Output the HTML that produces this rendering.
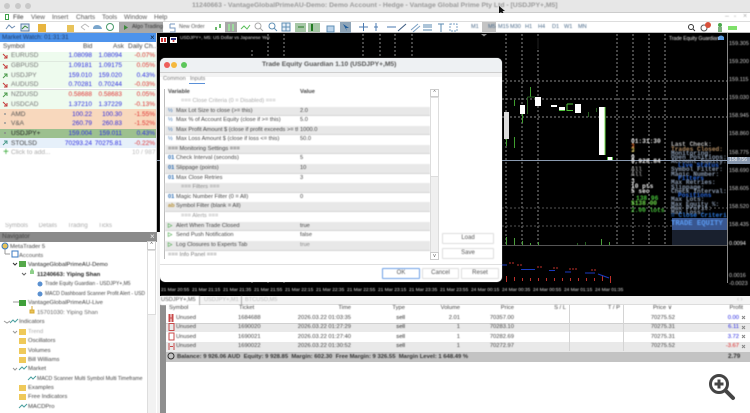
<!DOCTYPE html>
<html><head><meta charset="utf-8">
<style>
html,body{margin:0;padding:0;background:#fff}
#p{position:relative;width:750px;height:413px;overflow:hidden;font-family:"Liberation Sans",sans-serif;font-size:6.5px;color:#333;background:#fff}
#p div{position:absolute;white-space:nowrap;box-sizing:border-box}
.t{filter:blur(.4px)}
.mw{left:0;width:156px;height:9px;line-height:9px}
.nm{left:11px;color:#777}
.v{color:#2a2ae0;text-align:right}
.r{color:#e03030;text-align:right}
.dr{left:165px;width:265px;height:9.6px;line-height:9.6px;font-size:5.7px;color:#444}
.g{background:#e8e8e8;border-bottom:1px solid #d4d4d4}
.dr span{position:absolute;top:0}
.nv{font-size:5.9px;color:#444;line-height:9px;height:9px}
.ax{left:729px;color:#ccc;font-size:5.5px;line-height:7px}
.ov{font-family:"Liberation Mono",monospace;font-size:6.2px;line-height:6px;color:#bbb;font-weight:bold}
.br{left:166px;width:584px;height:9.6px;line-height:9.6px;font-size:5.8px;color:#444}
.br span{position:absolute;top:0}
.btn{border:1px solid #ddd;background:#fff;text-align:center;font-size:6px;color:#555;line-height:9px;border-radius:1px}
.tm{position:absolute;top:0;color:#ddd}
</style></head><body>
<div id="p">
<!-- title bar -->
<div style="left:0;top:0;width:750px;height:13px;background:#e7e7e7;border-bottom:1px solid #ccc"></div>
<div style="left:4px;top:3px;width:6px;height:6px;border-radius:50%;background:#c9c9c9"></div>
<div style="left:15px;top:3px;width:6px;height:6px;border-radius:50%;background:#c9c9c9"></div>
<div style="left:25px;top:3px;width:6px;height:6px;border-radius:50%;background:#c9c9c9"></div>
<div class="t" style="left:192px;top:1px;font-size:6.8px;line-height:10px;font-weight:bold;color:#9a9a9a">11240663 - VantageGlobalPrimeAU-Demo: Demo Account - Hedge - Vantage Global Prime Pty Ltd - [USDJPY+,M5]</div>
<svg style="position:absolute;left:498px;top:5px" width="8" height="11"><path d="M1 1 L1 9 L3 7 L5 10 L6 9 L4.500 6 L7 6 Z" fill="#111"/></svg>
<!-- menu -->
<div style="left:0;top:13px;width:750px;height:9px;background:#fff;border-bottom:1px solid #ddd"></div>
<div style="left:5px;top:14px;width:4px;height:6px;border:1px solid #3fa14a"></div>
<div class="t" style="left:13px;top:13px;font-size:6.5px;line-height:9px;color:#333">File</div>
<div class="t" style="left:31px;top:13px;line-height:9px;color:#555">View</div>
<div class="t" style="left:52px;top:13px;line-height:9px;color:#555">Insert</div>
<div class="t" style="left:76px;top:13px;line-height:9px;color:#555">Charts</div>
<div class="t" style="left:102px;top:13px;line-height:9px;color:#555">Tools</div>
<div class="t" style="left:124px;top:13px;line-height:9px;color:#555">Window</div>
<div class="t" style="left:154px;top:13px;line-height:9px;color:#555">Help</div>
<div class="t" style="left:725px;top:12px;font-size:7px;line-height:10px;color:#aaa">–</div>
<div class="t" style="left:734px;top:12px;font-size:6px;line-height:10px;color:#aaa">▫</div>
<div class="t" style="left:743px;top:12px;font-size:7px;line-height:10px;color:#aaa">×</div>
<!-- toolbar -->
<div style="left:0;top:22px;width:750px;height:11px;background:#fff;border-bottom:1px solid #bbb"></div>
<svg style="position:absolute;left:0;top:22px" width="750" height="11">
<path d="M6 7 L9 3 L12 6 L15 4" stroke="#6a8ab0" fill="none"/>
<rect x="21" y="2" width="8" height="7" fill="#dfe8f2" stroke="#5a7ea8"/><path d="M22 7 L25 4 L28 6" stroke="#3a8a3a" fill="none"/>
<rect x="38" y="2" width="8" height="8" fill="#e8b53f"/>
<rect x="67" y="3" width="7" height="7" fill="#e8c35a"/>
<path d="M81 5 L85 2 M81 5 L85 8 M89 5 L85 2" stroke="#bbb" fill="none"/>
<path d="M93 7 Q93 3 97 3 Q101 3 102 7 Z" fill="#7aa6cc"/>
<circle cx="110" cy="5" r="3.500" fill="none" stroke="#4a9a6a"/>
<rect x="119" y="0" width="44" height="11" fill="#a8a8a8"/><path d="M124 3 L124 8 L128 5.500 Z" fill="#3c8a3c"/>
<path d="M170 2 h5 M170 2 v4 h5 v4 h-5" stroke="#7a9ac0" fill="none"/>
<path d="M216 8 v-3 M220 6 v-4" stroke="#3ca23c" stroke-width="1.500"/>
<rect x="225" y="0" width="12" height="11" fill="#a8a8a8"/><rect x="228" y="2" width="2" height="7" fill="#9fdc9f"/><rect x="232" y="2" width="2" height="7" fill="#9fdc9f"/>
<path d="M241 7 L244 4 L247 7 L250 3" stroke="#5abf5a" fill="none"/>
<circle cx="258" cy="4" r="3" fill="none" stroke="#aaa"/><path d="M260 6 L263 9" stroke="#aaa"/>
<circle cx="272" cy="4" r="3" fill="none" stroke="#5f8fb5"/><path d="M274 6 L277 9" stroke="#5f8fb5"/>
<rect x="282" y="1" width="8" height="8" fill="#e4eef6" stroke="#5f8fb5"/><path d="M286 1 v8 M282 5 h8" stroke="#5f8fb5"/>
<rect x="295" y="1" width="11" height="9" fill="#a6c7a6"/><path d="M304 5 h-6" stroke="#227a22"/>
<rect x="308" y="1" width="12" height="9" fill="#a6c7a6"/><rect x="311" y="2" width="2" height="7" fill="#227a22"/>
<rect x="327" y="4" width="7" height="6" fill="#bcd4ea" stroke="#5f8fb5"/>
<rect x="340" y="0" width="11" height="11" fill="#8fa5b8"/><path d="M343 2 L349 6 L346 6 L347 9 Z" fill="#1a5a9a"/>
<path d="M359 5 h9 M363.500 1 v8" stroke="#4a7ab0"/><path d="M374 5 h4 M376 1 v8" stroke="#4a7ab0"/><path d="M387 5 h9" stroke="#4a7ab0"/>
<path d="M398 9 L406 2" stroke="#3a5a80"/><path d="M411 8 L418 2 M413 10 L420 4" stroke="#7aa0c4"/>
<path d="M423 3 h9 M423 5 h9 M423 8 h9" stroke="#5a8ab0"/><path d="M438 2 h6 M441 2 v8" stroke="#5a8ab0"/>
<rect x="450" y="2" width="7" height="7" fill="none" stroke="#7aa0c4" stroke-dasharray="2 1"/>
<rect x="482" y="0" width="14" height="11" fill="#c4c4c4"/>
<circle cx="691" cy="5" r="2.500" fill="none" stroke="#333"/><path d="M693 7 L695 9" stroke="#333"/>
<circle cx="704" cy="6" r="3" fill="none" stroke="#555"/><circle cx="708" cy="3" r="3" fill="#d8503a"/>
<circle cx="720" cy="3" r="2" fill="#4aa84a"/><rect x="718" y="5" width="4" height="5" fill="#7fae7f"/>
<rect x="728" y="4" width="9" height="4" fill="#7fe06a"/>
</svg>
<div class="t" style="left:132px;top:23px;line-height:9px;color:#333;font-size:5.5px">Algo Trading</div>
<div class="t" style="left:179px;top:23px;line-height:9px;color:#555;font-size:5.3px">New Order</div>
<div class="t" style="left:471px;top:23px;line-height:9px;color:#4a6a8a;font-size:5.6px">M1</div>
<div class="t" style="left:488px;top:23px;line-height:9px;color:#4a6a8a;font-size:5.6px">M5</div>
<div class="t" style="left:498px;top:23px;line-height:9px;color:#4a6a8a;font-size:5.6px">M15</div>
<div class="t" style="left:510px;top:23px;line-height:9px;color:#4a6a8a;font-size:5.6px">M30</div>
<div class="t" style="left:525px;top:23px;line-height:9px;color:#4a6a8a;font-size:5.6px">H1</div>
<div class="t" style="left:538px;top:23px;line-height:9px;color:#4a6a8a;font-size:5.6px">H4</div>
<div class="t" style="left:552px;top:23px;line-height:9px;color:#4a6a8a;font-size:5.6px">D1</div>
<div class="t" style="left:564px;top:23px;line-height:9px;color:#4a6a8a;font-size:5.6px">W1</div>
<div class="t" style="left:578px;top:23px;line-height:9px;color:#4a6a8a;font-size:5.6px">MN</div>
<!-- chart -->
<div style="left:157px;top:33px;width:593px;height:263px;background:#000"></div>
<svg style="position:absolute;left:157px;top:33px" width="593" height="263">
<g stroke="#8a8a8a" stroke-dasharray="2 2" fill="none">
<path d="M95 17V250M111 1V250M127 1V250M223 1V25M238 1V25M255 1V25M206 1V25"/>
<path d="M349 1V212M365 1V212M381 1V212M460 1V212M476 1V212M492 1V212M508 1V212"/>
<path d="M345 48H570M345 66H570M345 84H570"/>
</g>
<g stroke="#555" stroke-dasharray="2 2" fill="none"><path d="M345 175H570M345 193H570"/></g>
<path d="M0 127.500H593" stroke="#8a9ab0"/>
<path d="M345 212.500H570" stroke="#555"/>
<path d="M570.500 0V250" stroke="#888"/>
<!-- candles -->
<g fill="#fff">
<rect x="347" y="79" width="5" height="27" fill="#ddd"/>
<rect x="363" y="72" width="5" height="9"/>
<rect x="378" y="64" width="6" height="9"/>
<rect x="394" y="72" width="6" height="2"/>
<rect x="402" y="74" width="6" height="3"/>
<rect x="418" y="71" width="6" height="9"/>
<rect x="442" y="74" width="6" height="48"/>
<rect x="450" y="124" width="6" height="3"/>
</g>
<path d="M448 74V122" stroke="#6fe04a"/>
<path d="M402 77.500H408M410 71V77.500H416M410 71H416M450.500 124V127M455.500 124V127" stroke="#4fc23a" fill="none"/>
<path d="M349.500 106V113M357.500 67V73M357.500 104V115M365.500 81V90M373.500 54V64" stroke="#3f9f2f"/>
<path d="M370.500 64V81M370.500 64H378M431.500 79V84M439.500 75V79" stroke="#265f1f" fill="none"/>
<path d="M381 5V16" stroke="#222"/>
<!-- volumes -->
<path d="M349.500 204V212M357.500 205V212M365.500 208V212M373.500 210V212M381.500 209V212M444.500 206V212M452.500 209V212" stroke="#4a9f3a" stroke-width="1"/>
<path d="M420.500 210V212M428.500 209V212" stroke="#245f1f"/>
<!-- indicator -->
<g stroke="#c0302a"><path d="M349.500 243V249M357.500 244V248M365.500 245V248M373.500 245V248M381.500 245V248M389.500 245V248M397.500 245V248M405.500 245V248M413.500 245V248M421.500 245V248M429.500 245V248M437.500 245V248M445.500 243V248M453.500 243V250"/>
<path d="M352 230H358M360 232H366M380 234H386M396 235H402M412 236H420M434 237H440" stroke-dasharray="2 1"/></g>
<path d="M345 232H350M364 236.500H378M392 237.500H398M408 239H414M428 240H438M441 241L452 245" stroke="#1a3ac0"/>
<!-- bottom right panel -->
<rect x="515" y="185" width="55" height="12" fill="#39568f"/>
<rect x="515" y="197" width="55" height="15" fill="#19202e"/>
<!-- chart tab flags -->
<rect x="3" y="4" width="7" height="6" fill="#fff"/><rect x="4" y="5" width="2" height="4" fill="#c33"/><rect x="7" y="5" width="2" height="4" fill="#c33"/>
<rect x="13" y="4" width="7" height="6" fill="#fff"/><rect x="14" y="5" width="5" height="2" fill="#338"/><circle cx="16.500" cy="8" r="1" fill="#c33"/>
<path d="M561 4 q3 -3 6 0 v3 h-6 z" fill="#5a9ae0"/>
<path d="M326 1 l3 2.500 l3 -2.500 z" fill="#888" transform="translate(-2,0)"/>
</svg>
<div class="t" style="left:180px;top:34px;color:#ddd;font-size:4.7px;line-height:8px">USDJPY+, M5: US Dollar vs Japanese Yen</div>
<div class="t" style="left:669px;top:35px;color:#e8e8e8;font-size:5px;line-height:8px">Trade Equity Guardian</div>
<div class="ax t" style="top:41px">159.305</div>
<div class="ax t" style="top:59px">159.200</div>
<div class="ax t" style="top:77px">159.115</div>
<div class="ax t" style="top:95px">159.030</div>
<div class="ax t" style="top:113px">158.945</div>
<div class="ax t" style="top:131px">158.860</div>
<div class="ax t" style="top:150px">158.775</div>
<div style="left:727px;top:157px;width:23px;height:7px;background:#8a9ab0;color:#eee;font-size:5px;line-height:7px;padding-left:2px">158.756</div>
<div class="ax t" style="top:168px">158.690</div>
<div class="ax t" style="top:186px">158.605</div>
<div class="ax t" style="top:204px">158.520</div>
<div class="ax t" style="top:222px">158.435</div>
<div class="ax t" style="top:241px;color:#fff">0.0094</div>
<div class="ax t" style="top:273px">0.0016</div>
<div class="ax t" style="top:281px">-0.0023</div>
<!-- overlay -->
<div class="ov t" style="left:631px;top:139px;color:#e8e8e8;font-size:6.2px">01:31:30</div>
<div class="ov t" style="left:631px;top:144px;color:#e06a2a">3</div>
<div class="ov t" style="left:631px;top:148px;color:#d8c050">3</div>
<div class="ov t" style="left:631px;top:155px;color:#eee">9</div>
<div class="ov t" style="left:631px;top:159px;color:#eee">9,928.84</div>
<div class="ov t" style="left:631px;top:167px;color:#888">All</div>
<div class="ov t" style="left:631px;top:172px;color:#888">All</div>
<div class="ov t" style="left:631px;top:179px;color:#ddd">3</div>
<div class="ov t" style="left:631px;top:184px;color:#eee">10 pts</div>
<div class="ov t" style="left:631px;top:189px;color:#eee">5 sec</div>
<div class="ov t" style="left:636px;top:196px;color:#47c43a">138.96</div>
<div class="ov t" style="left:631px;top:201px;color:#6fe04a">$138.00</div>
<div class="ov t" style="left:631px;top:208px;color:#47c43a">2.00 lots</div>
<div class="ov t" style="left:671px;top:142px">Last Check:</div>
<div class="ov t" style="left:671px;top:147px;color:#b08a60">Trades Closed:</div>
<div class="ov t" style="left:671px;top:151px;color:#8a9ab0">Monitoring:</div>
<div class="ov t" style="left:671px;top:155px;color:#8a9ab0">Open Positions:</div>
<div class="ov t" style="left:671px;top:159px;color:#8a9ab0">Account Equity:</div>
<div class="ov t" style="left:678px;top:163px;color:#2a6ae0">Live Status</div>
<div class="ov t" style="left:671px;top:167px;color:#8a9ab0">Symbol Filter:</div>
<div class="ov t" style="left:671px;top:172px;color:#8a9ab0">Magic Number:</div>
<div class="ov t" style="left:678px;top:176px;color:#2a6ae0">Filters</div>
<div class="ov t" style="left:671px;top:180px;color:#8a9ab0">Max Retries:</div>
<div class="ov t" style="left:671px;top:185px;color:#8a9ab0">Slippage:</div>
<div class="ov t" style="left:671px;top:189px;color:#8a9ab0">Check Interval:</div>
<div class="ov t" style="left:678px;top:193px;color:#2a6ae0">Positions</div>
<div class="ov t" style="left:671px;top:197px;color:#8a9ab0">Max Lots:</div>
<div class="ov t" style="left:671px;top:202px;color:#8a9ab0">Max Equity %:</div>
<div class="ov t" style="left:671px;top:206px;color:#8a9ab0">Max Profit:</div>
<div class="ov t" style="left:671px;top:210px;color:#8a9ab0">Max Loss:</div>
<div class="ov t" style="left:671px;top:213px;color:#2a7ae0">= Close Criteri</div>
<div class="ov t" style="left:671px;top:221px;color:#5a9af0;font-size:7.2px">TRADE EQUITY</div>
<!-- time axis -->
<div class="t" style="left:161px;top:287px;width:470px;height:7px;font-size:4.8px;line-height:7px;overflow:hidden">
<span class="tm" style="left:0">21 Mar 20:55</span><span class="tm" style="left:31px">21 Mar 21:15</span><span class="tm" style="left:62px">21 Mar 21:35</span><span class="tm" style="left:93px">21 Mar 21:55</span><span class="tm" style="left:124px">21 Mar 22:15</span><span class="tm" style="left:155px">21 Mar 22:35</span><span class="tm" style="left:186px">21 Mar 22:55</span><span class="tm" style="left:217px">21 Mar 23:15</span><span class="tm" style="left:248px">21 Mar 23:35</span><span class="tm" style="left:279px">21 Mar 23:55</span><span class="tm" style="left:310px">24 Mar 00:15</span><span class="tm" style="left:341px">24 Mar 00:35</span><span class="tm" style="left:372px">24 Mar 00:55</span><span class="tm" style="left:403px">24 Mar 01:15</span><span class="tm" style="left:434px">24 Mar 01:35</span>
</div>
<!-- dialog -->
<div style="left:160px;top:58px;width:342px;height:224px;background:#fff;border-radius:5px;box-shadow:0 0 1px #999"></div>
<div style="left:160px;top:58px;width:342px;height:15px;background:#eef1f3;border-radius:5px 5px 0 0;border-bottom:1px solid #cfcfcf"></div>
<div style="left:164px;top:62px;width:6px;height:6px;border-radius:50%;background:#ee5f5b"></div>
<div style="left:171px;top:62px;width:6px;height:6px;border-radius:50%;background:#f5b83d"></div>
<div style="left:181px;top:62px;width:6px;height:6px;border-radius:50%;background:#5cc65a"></div>
<div class="t" style="left:262px;top:60px;font-size:6.7px;line-height:10px;font-weight:bold;color:#555">Trade Equity Guardian 1.10 (USDJPY+,M5)</div>
<div style="left:160px;top:73px;width:342px;height:4px;background:#f3f3f3"></div>
<div class="t" style="left:163px;top:75px;font-size:5.6px;line-height:9px;color:#777">Common</div>
<div class="t" style="left:190px;top:75px;font-size:5.6px;line-height:9px;color:#777">Inputs</div>
<div style="left:189px;top:83px;width:16px;height:1px;background:#5a90d8"></div>
<div style="left:164px;top:89px;width:1px;height:170px;background:#bbb"></div>
<div class="dr t" style="top:88px"><span style="left:3px;font-weight:bold">Variable</span><span style="left:135px;font-weight:bold">Value</span></div>
<div class="dr t" style="top:97px;color:#aaa"><span style="left:16px">=== Close Criteria (0 = Disabled) ===</span></div>
<div class="dr g t" style="top:106.5px"><span style="left:3px;color:#2a6ab0">½</span><span style="left:11px">Max Lot Size to close (&gt;= this)</span><span style="left:135px">2.0</span></div>
<div class="dr t" style="top:116px"><span style="left:3px;color:#2a6ab0">½</span><span style="left:11px">Max % of Account Equity (close if &gt;= this)</span><span style="left:135px">5.0</span></div>
<div class="dr g t" style="top:125.5px"><span style="left:3px;color:#2a6ab0">½</span><span style="left:11px;width:122px;overflow:hidden">Max Profit Amount $ (close if profit exceeds &gt;= this)</span><span style="left:135px">1000.0</span></div>
<div class="dr t" style="top:135px"><span style="left:3px;color:#2a6ab0">½</span><span style="left:11px">Max Loss Amount $ (close if loss &lt;= this)</span><span style="left:135px">50.0</span></div>
<div class="dr g t" style="top:144.5px"><span style="left:3px">=== Monitoring Settings ===</span></div>
<div class="dr t" style="top:154px"><span style="left:3px;color:#2a6ab0;font-weight:bold">01</span><span style="left:11px">Check Interval (seconds)</span><span style="left:135px">5</span></div>
<div class="dr g t" style="top:164px"><span style="left:3px;color:#2a6ab0;font-weight:bold">01</span><span style="left:11px">Slippage (points)</span><span style="left:135px">10</span></div>
<div class="dr t" style="top:173.5px"><span style="left:3px;color:#2a6ab0;font-weight:bold">01</span><span style="left:11px">Max Close Retries</span><span style="left:135px">3</span></div>
<div class="dr g t" style="top:183px;color:#888"><span style="left:16px">=== Filters ===</span></div>
<div class="dr t" style="top:192.5px"><span style="left:3px;color:#2a6ab0;font-weight:bold">01</span><span style="left:11px">Magic Number Filter (0 = All)</span><span style="left:135px">0</span></div>
<div class="dr g t" style="top:202px"><span style="left:3px;color:#b8923a;font-weight:bold">ab</span><span style="left:11px">Symbol Filter (blank = All)</span></div>
<div class="dr t" style="top:212px;color:#999"><span style="left:16px">=== Alerts ===</span></div>
<div class="dr g t" style="top:221.5px"><span style="left:3px;color:#3ca23c;font-weight:bold">▷</span><span style="left:11px">Alert When Trade Closed</span><span style="left:135px">true</span></div>
<div class="dr t" style="top:231px"><span style="left:3px;color:#3ca23c;font-weight:bold">▷</span><span style="left:11px">Send Push Notification</span><span style="left:135px">false</span></div>
<div class="dr g t" style="top:241px"><span style="left:3px;color:#3ca23c;font-weight:bold">▷</span><span style="left:11px">Log Closures to Experts Tab</span><span style="left:135px;color:#888">true</span></div>
<div class="dr t" style="top:250.5px;color:#777"><span style="left:3px">=== Info Panel ===</span></div>
<div style="left:430px;top:89px;width:9px;height:171px;background:#f0f0f0;border:1px solid #ddd"></div>
<div style="left:430px;top:89px;width:9px;height:8px;background:#fff;border:1px solid #ccc;font-size:5px;line-height:6px;text-align:center;color:#555">^</div>
<div style="left:430px;top:97px;width:9px;height:80px;background:#fff;border:1px solid #ddd"></div>
<div style="left:430px;top:252px;width:9px;height:8px;background:#fff;border:1px solid #ccc;font-size:5px;line-height:6px;text-align:center;color:#555">v</div>
<div style="left:160px;top:264px;width:342px;height:1px;background:#e0e0e0"></div>
<div class="btn t" style="left:442px;top:233px;width:52px;height:11px">Load</div>
<div class="btn t" style="left:442px;top:248px;width:52px;height:11px">Save</div>
<div class="btn t" style="left:382px;top:268px;width:38px;height:11px;border-color:#6a9ee6">OK</div>
<div class="btn t" style="left:422px;top:268px;width:37px;height:11px">Cancel</div>
<div class="btn t" style="left:461px;top:268px;width:38px;height:11px">Reset</div>
<!-- market watch -->
<div style="left:0;top:33px;width:157px;height:9px;background:#4d93ec"></div>
<div class="t" style="left:2px;top:33px;line-height:9px;color:#1d3a66;font-size:6.3px">Market Watch: 01:31:31</div>
<div style="left:150px;top:33px;line-height:9px;color:#123;font-size:8px">×</div>
<div class="t" style="left:3px;top:42px;line-height:10px;color:#444">Symbol</div>
<div class="t" style="left:83px;top:42px;line-height:10px;color:#444">Bid</div>
<div class="t" style="left:113px;top:42px;line-height:10px;color:#444">Ask</div>
<div class="t" style="left:128px;top:42px;line-height:10px;color:#444">Daily Ch...</div>
<div class="mw" style="top:52px;background:#eefbee;height:18px"></div>
<div class="mw" style="top:61px;height:1px;background:#dfe9df"></div>
<div class="mw" style="top:70px;background:#eefbee;height:18px"></div>
<div class="mw" style="top:89px;background:#eefbee;height:20px;border-top:1px solid #ddd"></div>
<div class="mw" style="top:109px;background:#f8d8bd;height:19.5px"></div>
<div class="mw" style="top:128.5px;background:#9cc08f;height:9.5px"></div>
<div class="mw" style="top:138px;background:#e6f0fa;height:10px"></div>
<div style="left:155.5px;top:33px;width:1.5px;height:199px;background:#ccc"></div>
<svg style="position:absolute;left:0;top:52px" width="12" height="100">
<path d="M3 2 L7 6 M7 3 V6 H4M3 12 L7 16 M7 13 V16 H4M3 31 L7 35 M7 32 V35 H4M3 50 L7 54 M7 51 V54 H4" stroke="#c43a3a" fill="none"/>
<path d="M3 26 L7 22 M4 22 H7 V25M3 45 L7 41 M4 41 H7 V44" stroke="#4a9a4a" fill="none"/>
<path d="M3 93 L7 89 M4 89 H7 V92" stroke="#4a9a8a" fill="none"/>
<circle cx="5" cy="62" r="1" fill="#999"/><circle cx="5" cy="71" r="1" fill="#999"/><circle cx="5" cy="81" r="1" fill="#888"/>
</svg>
<div class="t" style="left:3px;top:148px;line-height:9px;font-size:10px;color:#2da52d">+</div>

<div class="t mw nm" style="top:51px">EURUSD</div><div class="t v" style="left:62px;top:51px;width:30px;line-height:9px">1.08098</div><div class="t v" style="left:92px;top:51px;width:30px;line-height:9px">1.08094</div><div class="t r" style="left:125px;top:51px;width:30px;line-height:9px">-0.07%</div>
<div class="t mw nm" style="top:61px">GBPUSD</div><div class="t v" style="left:62px;top:61px;width:30px;line-height:9px">1.09181</div><div class="t v" style="left:92px;top:61px;width:30px;line-height:9px">1.09175</div><div class="t r" style="left:125px;top:61px;width:30px;line-height:9px">0.05%</div>
<div class="t mw nm" style="top:70.5px">USDJPY</div><div class="t v" style="left:62px;top:70.5px;width:30px;line-height:9px">159.010</div><div class="t v" style="left:92px;top:70.5px;width:30px;line-height:9px">159.020</div><div class="t v" style="left:125px;top:70.5px;width:30px;line-height:9px">0.43%</div>
<div class="t mw nm" style="top:80px">AUDUSD</div><div class="t v" style="left:62px;top:80px;width:30px;line-height:9px">0.70281</div><div class="t v" style="left:92px;top:80px;width:30px;line-height:9px">0.70244</div><div class="t r" style="left:125px;top:80px;width:30px;line-height:9px">-0.03%</div>
<div class="t mw nm" style="top:90px">NZDUSD</div><div class="t r" style="left:62px;top:90px;width:30px;line-height:9px">0.58688</div><div class="t r" style="left:92px;top:90px;width:30px;line-height:9px">0.58683</div><div class="t r" style="left:125px;top:90px;width:30px;line-height:9px">0.05%</div>
<div class="t mw nm" style="top:99.5px">USDCAD</div><div class="t v" style="left:62px;top:99.5px;width:30px;line-height:9px">1.37210</div><div class="t v" style="left:92px;top:99.5px;width:30px;line-height:9px">1.37229</div><div class="t r" style="left:125px;top:99.5px;width:30px;line-height:9px">-0.13%</div>
<div class="t mw nm" style="top:109.5px;color:#555">AMD</div><div class="t v" style="left:62px;top:109.5px;width:30px;line-height:9px">100.22</div><div class="t v" style="left:92px;top:109.5px;width:30px;line-height:9px">100.30</div><div class="t r" style="left:125px;top:109.5px;width:30px;line-height:9px">-1.55%</div>
<div class="t mw nm" style="top:119px;color:#555">V&amp;A</div><div class="t v" style="left:62px;top:119px;width:30px;line-height:9px">260.79</div><div class="t v" style="left:92px;top:119px;width:30px;line-height:9px">260.83</div><div class="t r" style="left:125px;top:119px;width:30px;line-height:9px">-1.52%</div>
<div class="t mw nm" style="top:129px;color:#222">USDJPY+</div><div class="t v" style="left:62px;top:129px;width:30px;line-height:9px">159.004</div><div class="t v" style="left:92px;top:129px;width:30px;line-height:9px">159.011</div><div class="t v" style="left:125px;top:129px;width:30px;line-height:9px">0.43%</div>
<div class="t mw nm" style="top:138.5px;color:#444">STOLSD</div><div class="t v" style="left:62px;top:138.5px;width:30px;line-height:9px">70293.24</div><div class="t v" style="left:92px;top:138.5px;width:30px;line-height:9px">70275.81</div><div class="t r" style="left:125px;top:138.5px;width:30px;line-height:9px">-0.22%</div>
<div class="t" style="left:11px;top:148px;line-height:9px;color:#aaa">Click to add...</div>
<div class="t" style="left:132px;top:148px;line-height:9px;color:#bbb">10 / 987</div>
<div class="t" style="left:5px;top:222px;line-height:9px;color:#aaa;font-size:6px;word-spacing:9px">Symbols Details Trading Ticks</div>
<!-- navigator -->
<div style="left:0;top:232px;width:157px;height:9.5px;background:#8a8a8a"></div>
<div class="t" style="left:2px;top:232px;line-height:9.5px;color:#444">Navigator</div>
<div style="left:150px;top:232px;line-height:9px;color:#eee;font-size:8px">×</div>
<div style="left:147px;top:241px;width:9px;height:172px;background:#f2f2f2;border-left:1px solid #ddd"></div>
<div style="left:147px;top:241px;width:9px;height:9px;background:#fff;border:1px solid #ccc;font-size:5px;line-height:7px;text-align:center">^</div>
<div style="left:147px;top:250px;width:9px;height:65px;background:#fff;border:1px solid #ddd"></div>
<div style="left:157px;top:232px;width:3px;height:181px;background:#f2f2f2"></div>
<div style="left:160px;top:305px;width:6px;height:108px;background:#8f8f8f"></div>
<div class="nv t" style="left:10px;top:243px">MetaTrader 5</div>
<div class="nv t" style="left:19px;top:252px;color:#555">Accounts</div>
<div class="nv t" style="left:28px;top:261px;color:#222">VantageGlobalPrimeAU-Demo</div>
<div class="nv t" style="left:37px;top:271px;color:#222;font-weight:bold">11240663: Yiping Shan</div>
<div class="nv t" style="left:45px;top:280px;font-size:5px">Trade Equity Guardian - USDJPY+,M5</div>
<div class="nv t" style="left:45px;top:290px;width:100px;overflow:hidden;font-size:5px">MACD Dashboard Scanner Profit Alert - USDJPY</div>
<div class="nv t" style="left:28px;top:299px;color:#444">VantageGlobalPrimeAU-Live</div>
<div class="nv t" style="left:37px;top:309px;color:#666">15701030: Yiping Shan</div>
<div class="nv t" style="left:19px;top:318px">Indicators</div>
<div class="nv t" style="left:28px;top:327.5px;color:#aaa">Trend</div>
<div class="nv t" style="left:28px;top:337px">Oscillators</div>
<div class="nv t" style="left:28px;top:346.5px">Volumes</div>
<div class="nv t" style="left:28px;top:356px">Bill Williams</div>
<div class="nv t" style="left:28px;top:365px">Market</div>
<div class="nv t" style="left:37px;top:374.5px;font-size:5.2px">MACD Scanner Multi Symbol Multi Timeframe</div>
<div class="nv t" style="left:28px;top:384px">Examples</div>
<div class="nv t" style="left:28px;top:393px">Free Indicators</div>
<div class="nv t" style="left:28px;top:402.5px">MACDPro</div>
<svg style="position:absolute;left:0;top:241px" width="60" height="172">
<g fill="none" stroke="#999">
<path d="M5 13 h5 M5 13 v-6"/><path d="M13 22 l2 2 l2 -2" stroke="#333"/><path d="M22 32 l2 2 l2 -2" stroke="#666"/>
<path d="M13 61 h6 M4 80 l3 2 l3 -2 M13 90 l2 2 l2 -2 M13 127 l2 2 l2 -2"/>
</g>
<circle cx="5" cy="5" r="3" fill="#e8c35a" stroke="#3a7ac0"/>
<rect x="12" y="10" width="6" height="6" fill="#fff" stroke="#3a7ac0"/>
<rect x="19" y="20" width="7" height="6" fill="#55a84a"/>
<rect x="19" y="59" width="7" height="6" fill="#3fa03a"/>
<path d="M30 30 l2 -3 l2 3 v3 h-4 z" fill="#8ecf8a"/>
<circle cx="40" cy="43" r="2.500" fill="#5a90d0"/><circle cx="40" cy="53" r="2.500" fill="#5a90d0"/>
<path d="M30 69 h4 v3 h-4 z M32 65 v4" stroke="#d8a830" fill="#e8c35a"/>
<path d="M10 82 l3 -3 l2 2 l3 -3" stroke="#4aa0a0" fill="none"/>
<path d="M19 129 l3 -3 l2 2 l3 -3" stroke="#4aa0a0" fill="none"/>
<path d="M28 139 l3 -3 l2 2 l3 -3" stroke="#4aa0a0" fill="none"/>
<path d="M19 167 l3 -3 l2 2 l3 -3" stroke="#4aa0a0" fill="none"/>
<g fill="#efc95a"><rect x="19" y="88" width="7" height="6"/><rect x="19" y="97" width="7" height="6"/><rect x="19" y="107" width="7" height="6"/><rect x="19" y="116" width="7" height="6"/><rect x="19" y="144" width="7" height="6"/><rect x="19" y="153" width="7" height="6"/></g>
</svg>
<!-- bottom panel -->
<div style="left:160px;top:296px;width:590px;height:9px;background:#f3f3f3;border-bottom:1px solid #ddd"></div>
<div class="t" style="left:161px;top:296px;width:39px;height:9px;background:#fff;line-height:9px;font-size:5.6px;color:#555;border-right:1px solid #aaa">USDJPY+,M5</div>
<div class="t" style="left:204px;top:296px;line-height:9px;font-size:5.6px;color:#bbb">USDJPY+,M1</div>
<div class="t" style="left:241px;top:296px;line-height:9px;font-size:5.6px;color:#bbb;border-left:1px solid #aaa;padding-left:3px">BTCUSD,M5</div>
<div class="t" style="left:737px;top:296px;line-height:9px;font-size:6px;color:#bbb">‹ ›</div>
<div style="left:166px;top:322.5px;width:584px;height:9.5px;background:#e9e9e9;border-top:1px solid #d0d0d0"></div>
<div style="left:166px;top:342px;width:584px;height:9.5px;background:#e9e9e9"></div>
<div style="left:166px;top:351.5px;width:584px;height:10px;background:#c3c3c3"></div>
<div style="left:569px;top:305px;width:1px;height:46px;background:#d4d4d4"></div>
<div style="left:623px;top:305px;width:1px;height:46px;background:#d4d4d4"></div>
<div class="br t" style="top:304px"><span style="left:3px">Symbol</span><span style="left:73px">Ticket</span><span style="right:399px">Time</span><span style="right:345px">Type</span><span style="right:290px">Volume</span><span style="right:236px">Price</span><span style="right:184px">S / L</span><span style="right:130px">T / P</span><span style="right:78px">Price ∨</span><span style="right:7px">Profit</span></div>
<div class="br t" style="top:313.5px"><span style="left:10px">Unused</span><span style="left:72px">1684688</span><span style="right:399px">2026.03.22 01:03:35</span><span style="right:345px;color:#222">sell</span><span style="right:290px">2.01</span><span style="right:236px">70357.00</span><span style="right:75px">70275.52</span><span style="right:11px;color:#2222e0">0.00</span></div>
<div class="br t" style="top:323px"><span style="left:10px">Unused</span><span style="left:72px">1690020</span><span style="right:399px">2026.03.22 01:27:29</span><span style="right:345px;color:#222">sell</span><span style="right:290px">1</span><span style="right:236px">70283.10</span><span style="right:75px">70275.31</span><span style="right:11px;color:#2222e0">6.11</span></div>
<div class="br t" style="top:332.5px"><span style="left:10px">Unused</span><span style="left:72px">1690021</span><span style="right:399px">2026.03.22 01:27:40</span><span style="right:345px;color:#222">sell</span><span style="right:290px">1</span><span style="right:236px">70282.69</span><span style="right:75px">70275.31</span><span style="right:11px;color:#2222e0">3.72</span></div>
<div class="br t" style="top:342px"><span style="left:10px">Unused</span><span style="left:72px">1690022</span><span style="right:399px">2026.03.22 01:30:52</span><span style="right:345px;color:#222">sell</span><span style="right:290px">1</span><span style="right:236px">70272.97</span><span style="right:75px">70275.52</span><span style="right:11px;color:#e02020">-3.67</span></div>
<svg style="position:absolute;left:166px;top:313px" width="584" height="48">
<g fill="#fff" stroke="#c84a4a"><path d="M3 1.500h1v7h-1zM7 1.500h-1v7h1z" fill="none"/><path d="M4 5h2" stroke="#c84a4a"/><rect x="3" y="10.500" width="5" height="7" fill="none"/><rect x="3" y="20" width="5" height="7" fill="none"/><path d="M3 30v7M8 30v7M4 33.500h3" fill="none"/></g>
<circle cx="5" cy="43" r="3" fill="none" stroke="#333"/>
<path d="M576 3l3 3m0-3l-3 3M576 13l3 3m0-3l-3 3M576 22l3 3m0-3l-3 3M576 32l3 3m0-3l-3 3" stroke="#888" fill="none"/>
</svg>
<div class="t" style="left:177px;top:351.5px;line-height:10px;font-size:5.9px;font-weight:bold;color:#333">Balance: 9 926.06 AUD &nbsp;Equity: 9 928.85 &nbsp;Margin: 602.30 &nbsp;Free Margin: 9 326.55 &nbsp;Margin Level: 1 648.49 %</div>
<div class="t" style="left:728px;top:351.5px;line-height:10px;font-size:6.3px;font-weight:bold;color:#333">2.79</div>
<!-- zoom lens -->
<svg style="position:absolute;left:708px;top:372px" width="30" height="30">
<circle cx="11" cy="12" r="8.500" fill="none" stroke="#444" stroke-width="3"/>
<path d="M17.500 18.500 L25 26" stroke="#444" stroke-width="4" stroke-linecap="round"/>
<path d="M11 7.500V16.500M6.500 12H15.500" stroke="#444" stroke-width="3"/>
</svg>
</div>
</body></html>
